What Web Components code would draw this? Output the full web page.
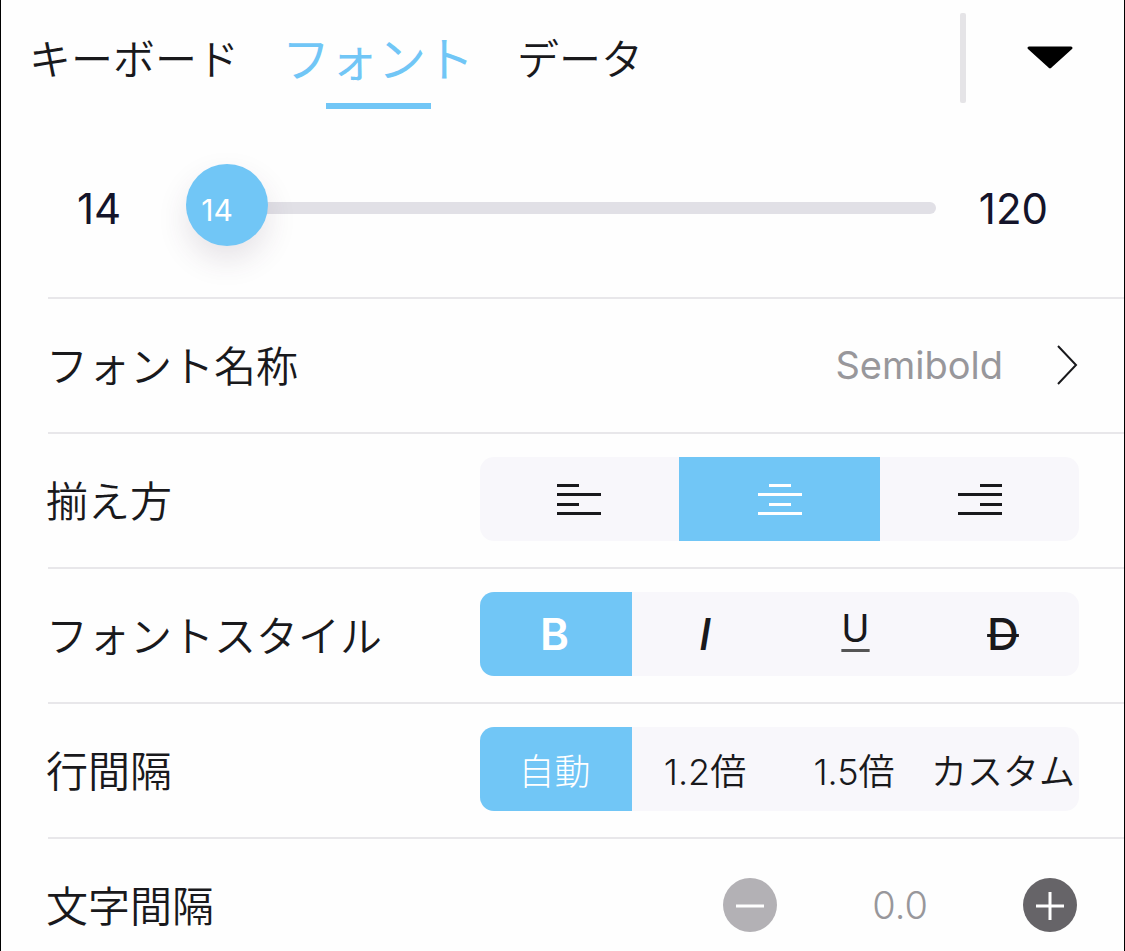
<!DOCTYPE html>
<html lang="ja">
<head>
<meta charset="utf-8">
<meta name="viewport" content="width=device-width, initial-scale=1">
<title>フォント</title>
<style>
    :root {
        --accent: #71c6f6;
        --ink: #19191c;
        --muted: #98979b;
        --line: #e8e7ea;
        --fill: #f8f7fb;
        --page: #fefefe;
    }
    * { box-sizing: border-box; }
    body {
        margin: 0;
        height: 100vh;
        overflow: auto;
        scrollbar-width: none;
        background: var(--page);
        border: solid #000;
        border-width: 0 1px;
        color: var(--ink);
        font-family: Inter, "Noto Sans CJK JP", sans-serif;
        font-size: 42px;
        font-weight: 350;
    }
</style>
</head>
<body>
<font-panel></font-panel>

<script>
const BASE = `
    :host, * { box-sizing: border-box; }
    button {
        margin: 0;
        padding: 0;
        border: none;
        background: none;
        color: inherit;
        font: inherit;
        white-space: nowrap;
        cursor: pointer;
    }
    svg { display: block; }
`;

/** <panel-tabs active="1"> - top bar: tab buttons, divider, collapse button. */
class PanelTabs extends HTMLElement {
    constructor() {
        super();
        this.attachShadow({ mode: "open" }).innerHTML = `
            <style>
                ${BASE}
                :host {
                    display: flex;
                    align-items: center;
                    height: 116px;
                    padding: 0 50px 0 28px;
                }
                nav { display: flex; flex: 1; gap: 43px; }
                button { height: 116px; }
                .tab {
                    display: flex;
                    flex-direction: column;
                    align-items: center;
                    padding-top: 16px;
                    line-height: 87px;
                }
                .tab.on {
                    color: var(--accent);
                    font-size: 48px;
                    font-weight: 400;
                }
                .tab.on::after {
                    content: "";
                    width: 105px;
                    height: 6px;
                    background: currentColor;
                }
                .rule {
                    width: 6px;
                    height: 90px;
                    margin-right: 60px;
                    border-radius: 2px;
                    background: #e5e4e7;
                }
            </style>
            <nav></nav>
            <span class="rule"></span>
            <button type="button" class="fold" aria-label="閉じる">
                <svg width="48" height="28" viewBox="0 0 48 28">
                    <path d="M3 4H45L24 23Z" fill="#000" stroke="#000" stroke-width="3" stroke-linejoin="round"/>
                </svg>
            </button>
        `;
    }

    connectedCallback() {
        const nav = this.shadowRoot.querySelector("nav");
        const names = this.getAttribute("names").split(",");
        const active = Number(this.getAttribute("active"));
        nav.replaceChildren(...names.map((name, i) => {
            const b = document.createElement("button");
            b.type = "button";
            b.className = i === active ? "tab on" : "tab";
            b.textContent = name;
            b.addEventListener("click", () => {
                nav.querySelectorAll(".tab").forEach((t) => t.classList.toggle("on", t === b));
            });
            return b;
        }));
    }
}

/** <size-slider min max value> - range input with its value shown on the thumb. */
class SizeSlider extends HTMLElement {
    connectedCallback() {
        if (this.shadowRoot) return;
        const min = this.getAttribute("min");
        const max = this.getAttribute("max");
        const value = this.getAttribute("value");
        this.attachShadow({ mode: "open" }).innerHTML = `
            <style>
                ${BASE}
                :host {
                    display: grid;
                    grid-template-columns: 109px 1fr 112px;
                    align-items: center;
                    height: 181px;
                    padding: 3px 76px 0;
                    font-weight: 400;
                    color: #14142a;
                }
                .max { text-align: right; }
                .track { position: relative; display: flex; align-items: center; }
                input {
                    appearance: none;
                    width: 100%;
                    height: 82px;
                    margin: 0;
                    background: none;
                }
                input::-webkit-slider-runnable-track {
                    height: 12px;
                    border-radius: 6px;
                    background: #e1e0e6;
                }
                input::-webkit-slider-thumb {
                    appearance: none;
                    width: 82px;
                    height: 82px;
                    margin-top: -38px;
                    border-radius: 50%;
                    background: var(--accent);
                    box-shadow: 0 14px 30px rgba(70, 50, 80, 0.13);
                }
                output {
                    position: absolute;
                    left: calc((100% - 82px) * var(--at));
                    width: 62px;
                    padding-top: 4px;
                    text-align: center;
                    font-size: 30px;
                    color: #fff;
                    pointer-events: none;
                }
            </style>
            <span>${min}</span>
            <div class="track">
                <input id="size" type="range" min="${min}" max="${max}" value="${value}" aria-label="フォントサイズ">
                <output for="size"></output>
            </div>
            <span class="max">${max}</span>
        `;
        const input = this.shadowRoot.querySelector("input");
        const out = this.shadowRoot.querySelector("output");
        const sync = () => {
            out.textContent = input.value;
            out.style.setProperty("--at", (input.value - min) / (max - min));
        };
        input.addEventListener("input", sync);
        sync();
    }
}

/** <setting-row label="…"> - label on the left, slotted control on the right. */
class SettingRow extends HTMLElement {
    connectedCallback() {
        if (this.shadowRoot) return;
        this.attachShadow({ mode: "open" }).innerHTML = `
            <style>
                ${BASE}
                :host {
                    display: flex;
                    align-items: center;
                    justify-content: space-between;
                    height: 135px;
                    margin-left: 47px;
                    padding: 0 45px 4px 0;
                    border-top: 2px solid var(--line);
                }
                .label { white-space: nowrap; margin-left: -2px; }
            </style>
            <span class="label"></span>
            <slot></slot>
        `;
        this.shadowRoot.querySelector(".label").textContent = this.getAttribute("label");
    }
}

/** <font-link> - current font name with a chevron. */
class FontLink extends HTMLElement {
    constructor() {
        super();
        this.attachShadow({ mode: "open" }).innerHTML = `
            <style>
                ${BASE}
                :host { display: block; }
                button {
                    display: flex;
                    align-items: center;
                    gap: 52px;
                    padding-top: 3px;
                    font-size: 38px;
                    font-weight: 400;
                    color: var(--muted);
                }
            </style>
            <button type="button">
                <slot></slot>
                <svg width="24" height="40" viewBox="0 0 24 40" fill="none" stroke="#19191c" stroke-width="2">
                    <path d="M3 1L21 20L3 39"/>
                </svg>
            </button>
        `;
    }
}

/** <segment-bar> - rounded strip of slotted <segment-item>s. */
class SegmentBar extends HTMLElement {
    constructor() {
        super();
        this.attachShadow({ mode: "open" }).innerHTML = `
            <style>
                ${BASE}
                :host {
                    display: flex;
                    width: 599px;
                    height: 84px;
                    border-radius: 14px;
                    overflow: hidden;
                    background: var(--fill);
                }
            </style>
            <slot></slot>
        `;
        this.addEventListener("click", (e) => {
            const item = e.target.closest("segment-item");
            if (!item) return;
            if (this.hasAttribute("multiple")) item.toggleAttribute("on");
            else for (const i of this.children) i.toggleAttribute("on", i === item);
        });
    }
}

/** <segment-item [on] [look="bold|italic|under|strike"] [align="left|center|right"]> */
class SegmentItem extends HTMLElement {
    connectedCallback() {
        if (this.shadowRoot) return;
        const align = this.getAttribute("align");
        const x = { left: 0, center: 11, right: 22 }[align];
        const icon = `
            <svg width="44" height="34" viewBox="0 0 44 34" fill="currentColor">
                <rect x="${x}" y="1" width="22" height="3"/>
                <rect x="0" y="10" width="44" height="3"/>
                <rect x="${x}" y="20" width="22" height="3"/>
                <rect x="0" y="29" width="44" height="3"/>
            </svg>`;
        this.attachShadow({ mode: "open" }).innerHTML = `
            <style>
                ${BASE}
                :host { display: block; flex: 1 1 0; min-width: 0; }
                :host([on]) { flex-basis: 3px; }
                button {
                    display: flex;
                    align-items: center;
                    justify-content: center;
                    width: 100%;
                    height: 100%;
                    padding-right: 3px;
                    font-size: 36px;
                }
                :host([align]) button { padding: 2px 0 0; }
                :host([on]) button { background: var(--accent); color: #fff; }
                :host([on]:not([look])) button { font-weight: 300; }
                :host([look]) button { font-size: 44px; }
                :host([look="bold"]) button { font-weight: 600; }
                :host([look="italic"]) button { font-style: italic; font-weight: 500; }
                :host([look="under"]) button {
                    font-size: 38px;
                    font-weight: 400;
                    text-decoration: underline 3px #555;
                    text-underline-offset: 7px;
                    padding: 0 0 12px;
                }
                :host([look="strike"]) button {
                    font-weight: 500;
                    text-decoration: line-through 3px;
                }
            </style>
            <button type="button"${align ? ` aria-label="${this.getAttribute("name")}"` : ""}>${align ? icon : "<slot></slot>"}</button>
        `;
    }
}

/** <value-stepper value="0.0"> - minus / value / plus. */
class ValueStepper extends HTMLElement {
    connectedCallback() {
        if (this.shadowRoot) return;
        this.attachShadow({ mode: "open" }).innerHTML = `
            <style>
                ${BASE}
                :host {
                    display: flex;
                    align-items: center;
                    justify-content: space-between;
                    width: 356px;
                    padding: 2px 2px 0 0;
                    font-size: 38px;
                    font-weight: 300;
                    color: var(--muted);
                }
                button {
                    width: 54px;
                    height: 54px;
                    border-radius: 50%;
                    background: #666468;
                }
                button.low { background: #b3b1b5; }
            </style>
            <button type="button" class="low" aria-label="減らす">
                <svg width="54" height="54" viewBox="0 0 54 54" stroke="#fff" stroke-width="3"><path d="M13 28H41"/></svg>
            </button>
            <output></output>
            <button type="button" class="high" aria-label="増やす">
                <svg width="54" height="54" viewBox="0 0 54 54" stroke="#fff" stroke-width="3"><path d="M13 28H41M27 14V42"/></svg>
            </button>
        `;
        const out = this.shadowRoot.querySelector("output");
        let value = Number(this.getAttribute("value"));
        const step = (d) => {
            value = Math.max(0, value + d);
            out.textContent = value.toFixed(1);
        };
        this.shadowRoot.querySelector(".low").addEventListener("click", () => step(-0.1));
        this.shadowRoot.querySelector(".high").addEventListener("click", () => step(0.1));
        step(0);
    }
}

class FontPanel extends HTMLElement {
    constructor() {
        super();
        this.attachShadow({ mode: "open" }).innerHTML = `
            <style>:host { display: block; }</style>
            <panel-tabs names="キーボード,フォント,データ" active="1"></panel-tabs>
            <size-slider min="14" max="120" value="14"></size-slider>
            <setting-row label="フォント名称">
                <font-link>Semibold</font-link>
            </setting-row>
            <setting-row label="揃え方">
                <segment-bar>
                    <segment-item align="left" name="左揃え"></segment-item>
                    <segment-item align="center" name="中央揃え" on></segment-item>
                    <segment-item align="right" name="右揃え"></segment-item>
                </segment-bar>
            </setting-row>
            <setting-row label="フォントスタイル">
                <segment-bar multiple>
                    <segment-item look="bold" on>B</segment-item>
                    <segment-item look="italic">I</segment-item>
                    <segment-item look="under">U</segment-item>
                    <segment-item look="strike">D</segment-item>
                </segment-bar>
            </setting-row>
            <setting-row label="行間隔">
                <segment-bar>
                    <segment-item on>自動</segment-item>
                    <segment-item>1.2倍</segment-item>
                    <segment-item>1.5倍</segment-item>
                    <segment-item>カスタム</segment-item>
                </segment-bar>
            </setting-row>
            <setting-row label="文字間隔">
                <value-stepper value="0.0"></value-stepper>
            </setting-row>
        `;
    }
}

customElements.define("panel-tabs", PanelTabs);
customElements.define("size-slider", SizeSlider);
customElements.define("setting-row", SettingRow);
customElements.define("font-link", FontLink);
customElements.define("segment-bar", SegmentBar);
customElements.define("segment-item", SegmentItem);
customElements.define("value-stepper", ValueStepper);
customElements.define("font-panel", FontPanel);
</script>
</body>
</html>
